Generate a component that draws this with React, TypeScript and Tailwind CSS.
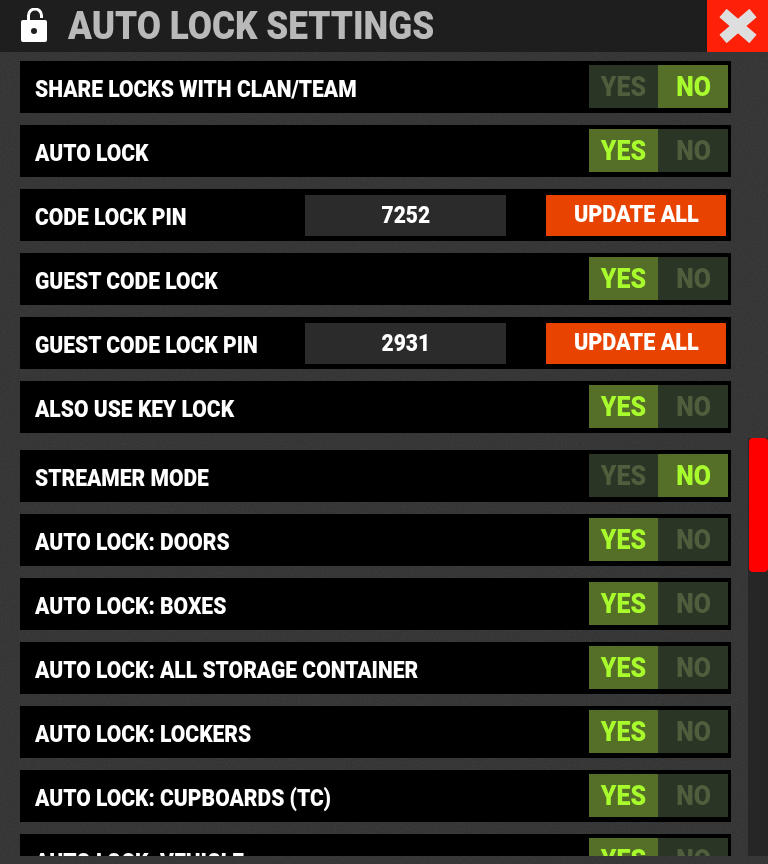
import { Fragment } from "react";

type Row =
  | { kind: "toggle"; label: string; value: boolean }
  | { kind: "pin"; label: string; pin: string };

const lockRows: Row[] = [
  { kind: "toggle", label: "SHARE LOCKS WITH CLAN/TEAM", value: false },
  { kind: "toggle", label: "AUTO LOCK", value: true },
  { kind: "pin", label: "CODE LOCK PIN", pin: "7252" },
  { kind: "toggle", label: "GUEST CODE LOCK", value: true },
  { kind: "pin", label: "GUEST CODE LOCK PIN", pin: "2931" },
  { kind: "toggle", label: "ALSO USE KEY LOCK", value: true },
];

const autoRows: Row[] = [
  { kind: "toggle", label: "STREAMER MODE", value: false },
  { kind: "toggle", label: "AUTO LOCK: DOORS", value: true },
  { kind: "toggle", label: "AUTO LOCK: BOXES", value: true },
  { kind: "toggle", label: "AUTO LOCK: ALL STORAGE CONTAINER", value: true },
  { kind: "toggle", label: "AUTO LOCK: LOCKERS", value: true },
  { kind: "toggle", label: "AUTO LOCK: CUPBOARDS (TC)", value: true },
  { kind: "toggle", label: "AUTO LOCK: VEHICLE", value: true },
];

function Toggle({ value }: { value: boolean }) {
  const on = "bg-[#566f28] text-[#a8fb2c]";
  const off = "bg-[#2a3526] text-[#4f5e3c]";
  return (
    <div className="flex h-[43px] w-[139px] text-[28px] font-black">
      <div className={`flex w-[69px] items-center justify-center ${value ? on : off}`}>
        <span className="inline-block scale-x-[0.89]">YES</span>
      </div>
      <div className={`flex w-[70px] items-center justify-center ${value ? off : on}`}>
        <span className="inline-block scale-x-[0.89]">NO</span>
      </div>
    </div>
  );
}

function SettingRow({ row }: { row: Row }) {
  return (
    <div className="relative flex h-[52px] w-[711px] shrink-0 items-start bg-black">
      <div className="flex h-[52px] w-[285px] shrink-0 items-center pl-[14.5px] pt-[3px]">
        <span className="inline-block origin-left scale-x-[0.877] whitespace-nowrap text-[24px] font-black text-white">
          {row.label}
        </span>
      </div>
      {row.kind === "toggle" ? (
        <div className="ml-auto mr-[3px] mt-[4px]">
          <Toggle value={row.value} />
        </div>
      ) : (
        <Fragment>
          <div className="mt-[6px] flex h-[41px] w-[201px] items-center justify-center bg-[#2b2b2b] pb-[2px] text-[24px] font-black text-white">
            <span className="inline-block scale-x-[0.875]">{row.pin}</span>
          </div>
          <div className="ml-[40px] mt-[6px] flex h-[41px] w-[180px] items-center justify-center bg-[#e84300] pb-[3px] text-[24px] font-black text-white">
            <span className="inline-block scale-x-[0.9] whitespace-nowrap">UPDATE ALL</span>
          </div>
        </Fragment>
      )}
    </div>
  );
}

export default function App() {
  return (
    <div className="relative flex h-[864px] w-[768px] flex-col overflow-hidden bg-[#323232] font-['Roboto',sans-serif]">
      {/* grain over the panel background, rows sit above it */}
      <svg className="absolute inset-0 h-full w-full opacity-[0.07]">
        <filter id="grain">
          <feTurbulence type="fractalNoise" baseFrequency="0.55" numOctaves="2" />
          <feColorMatrix type="saturate" values="0" />
        </filter>
        <rect width="100%" height="100%" filter="url(#grain)" />
      </svg>
      <header className="relative flex h-[52px] shrink-0 items-center bg-[#1e1e1e]">
        <svg viewBox="0 0 28 36" className="ml-[20px] h-[36px] w-[28px]" fill="#fff">
          <path d="M8.5 13V7.5a6.5 6.5 0 0 1 13 0V10" fill="none" stroke="#fff" strokeWidth="3" />
          <path
            fillRule="evenodd"
            d="M3 12h22a2 2 0 0 1 2 2v18a2 2 0 0 1-2 2H3a2 2 0 0 1-2-2V14a2 2 0 0 1 2-2zm11 8a3 3 0 1 0 0 6 3 3 0 0 0 0-6z"
          />
        </svg>
        <span className="ml-[20px] inline-block origin-left scale-x-[0.925] whitespace-nowrap text-[38px] font-black text-[#b9b9b9]">
          AUTO LOCK SETTINGS
        </span>
        <button className="ml-auto flex h-[52px] w-[61px] items-center justify-center bg-[#ff2008]">
          <svg viewBox="0 0 42 34" className="h-[34px] w-[42px]">
            <path d="M6 4l30 26M36 4L6 30" stroke="#dedede" strokeWidth="11" />
          </svg>
        </button>
      </header>
      <div className="relative flex h-[804px] shrink-0 flex-col overflow-hidden pl-[20px] pt-[9px]">
        <div className="flex flex-col gap-[12px]">
          {lockRows.map((row) => (
            <SettingRow key={row.label} row={row} />
          ))}
        </div>
        <div className="mt-[17px] flex flex-col gap-[12px]">
          {autoRows.map((row) => (
            <SettingRow key={row.label} row={row} />
          ))}
        </div>
      </div>
      <div className="h-[8px] shrink-0" />
      {/* scrollbar sits over the list */}
      <div className="absolute left-[748px] top-[438px] h-[418px] w-[20px] bg-[#262626]">
        <div className="ml-[1px] h-[134px] w-[19px] rounded-[4px] bg-[#ff0000]" />
      </div>
    </div>
  );
}
